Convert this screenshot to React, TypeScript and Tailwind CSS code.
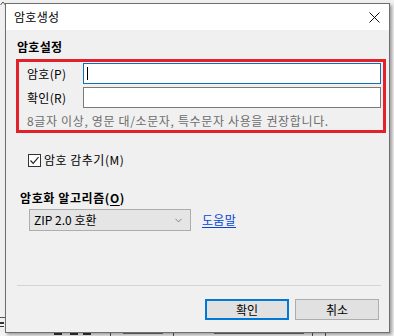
import { ChevronDown } from "lucide-react";

function CloseIcon() {
  return (
    <svg width="11" height="11" viewBox="0 0 11 11" className="block">
      <path d="M0.5 0.5 L10.5 10.5 M10.5 0.5 L0.5 10.5" stroke="#111" strokeWidth="1" />
    </svg>
  );
}

function CheckBox() {
  return (
    <div className="flex h-[13px] w-[13px] items-center justify-center border border-[#333] bg-white">
      <svg width="11" height="11" viewBox="0 0 11 11">
        <path d="M1.5 5.5 L4.2 8.3 L9.5 2.2" fill="none" stroke="#222" strokeWidth="1.2" />
      </svg>
    </div>
  );
}

export default function App() {
  return (
    <div className="relative h-[336px] w-[394px] overflow-hidden bg-[#f0f0f0] font-['Noto_Sans_CJK_KR','Noto_Sans',sans-serif] text-[12px] text-black">
      {/* what is under the dialog */}
      <svg width="6" height="5" viewBox="0 0 6 5" className="absolute left-0 top-[1px]">
        <path d="M0.5 4 L3 1 L5.5 4" fill="none" stroke="#555" strokeWidth="1" />
      </svg>
      <div className="absolute left-0 top-[317px] h-px w-[6px] bg-[#555]" />
      <div className="absolute left-0 top-[322px] h-[8px] w-[5px] overflow-hidden">
        <div className="h-[2px] w-[4px] bg-[#333]" />
        <div className="mt-[2px] h-[1px] w-[4px] bg-[#333]" />
      </div>
      <div className="absolute bottom-0 left-0 flex h-[4px] w-full items-start bg-[#f4f4f4]">
        <div className="ml-[54px] h-[3px] w-[8px] bg-[#333]" />
        <div className="ml-[8px] h-[3px] w-[8px] bg-[#333]" />
        <div className="ml-[5px] h-[3px] w-[8px] bg-[#333]" />
        <div className="ml-[19px] h-[4px] w-px bg-[#555]" />
        <div className="ml-[12px] h-[2px] w-[40px] bg-[#777]" />
        <div className="ml-[10px] h-[4px] w-px bg-[#555]" />
        <div className="ml-[40px] h-[2px] w-[90px] bg-[#777]" />
        <div className="ml-[8px] h-[4px] w-px bg-[#555]" />
        <div className="ml-[12px] h-[4px] w-px bg-[#555]" />
      </div>

      {/* dialog */}
      <div className="relative ml-[5px] mt-[3px] flex h-[330px] w-[385px] flex-col border border-[#6e6e6e] bg-[#f0f0f0] shadow-[2px_2px_3px_rgba(0,0,0,0.35)]">
        <div className="flex h-[26px] items-center justify-between bg-white pl-[8px] pr-[9px]">
          <span className="leading-[16px] tracking-[0.3px]">암호생성</span>
          <CloseIcon />
        </div>

        <div className="flex flex-1 flex-col pl-[10px]">
          <div className="ml-px mt-[9px] font-bold leading-[16px] tracking-[0.3px]">암호설정</div>

          <div className="mt-[4px] h-[74px] w-[370px] border-[3px] border-[#e2212b]">
            <div className="mt-px flex h-[21px] items-center">
              <span className="w-[64px] pl-[8px] leading-[16px] tracking-[0.3px]">암호(P)</span>
              <div className="flex h-[21px] w-[298px] items-center border border-[#0f6fb8] bg-white pl-[3px]">
                <div className="h-[13px] w-px bg-black" />
              </div>
            </div>
            <div className="mt-[3px] flex h-[21px] items-center">
              <span className="w-[64px] pl-[8px] leading-[16px] tracking-[0.3px]">확인(R)</span>
              <div className="h-[21px] w-[298px] border border-[#7a7a7a] bg-white" />
            </div>
            <div className="mt-[5px] whitespace-nowrap pl-[8px] leading-[16px] tracking-[0.65px] text-[#6d6d6d]">
              8글자 이상, 영문 대/소문자, 특수문자 사용을 권장합니다.
            </div>
          </div>

          <div className="ml-[12px] mt-[19px] flex h-[16px] items-center gap-[3px]">
            <CheckBox />
            <span className="leading-[16px] tracking-[0.5px]">암호 감추기(M)</span>
          </div>

          <div className="ml-[4px] mt-[22px] font-bold leading-[16px] tracking-[0.6px]">
            암호화 알고리즘(<span className="underline underline-offset-2">O</span>)
          </div>

          <div className="ml-[13px] mt-[3px] flex items-center gap-[11px]">
            <div className="flex h-[22px] w-[162px] items-center justify-between border border-[#adadad] bg-[#e5e5e5] pl-[4px] pr-[6px]">
              <span className="leading-[16px]">ZIP 2.0 호환</span>
              <ChevronDown size={11} strokeWidth={1.5} color="#555" />
            </div>
            <span className="leading-[16px] tracking-[0.3px] text-[#0645d8] underline underline-offset-2">도움말</span>
          </div>

          <div className="flex-1" />

          <div className="ml-px mr-[8px] h-px bg-[#d5d5d5]" />
          <div className="mb-[12px] mr-[10px] mt-[13px] flex justify-end gap-[6px]">
            <div className="flex h-[21px] w-[84px] items-center justify-center border-2 border-[#0078d7] bg-[#e1e1e1] leading-[16px]">
              확인
            </div>
            <div className="flex h-[21px] w-[84px] items-center justify-center border border-[#adadad] bg-[#e1e1e1] leading-[16px]">
              취소
            </div>
          </div>
        </div>
      </div>
    </div>
  );
}
